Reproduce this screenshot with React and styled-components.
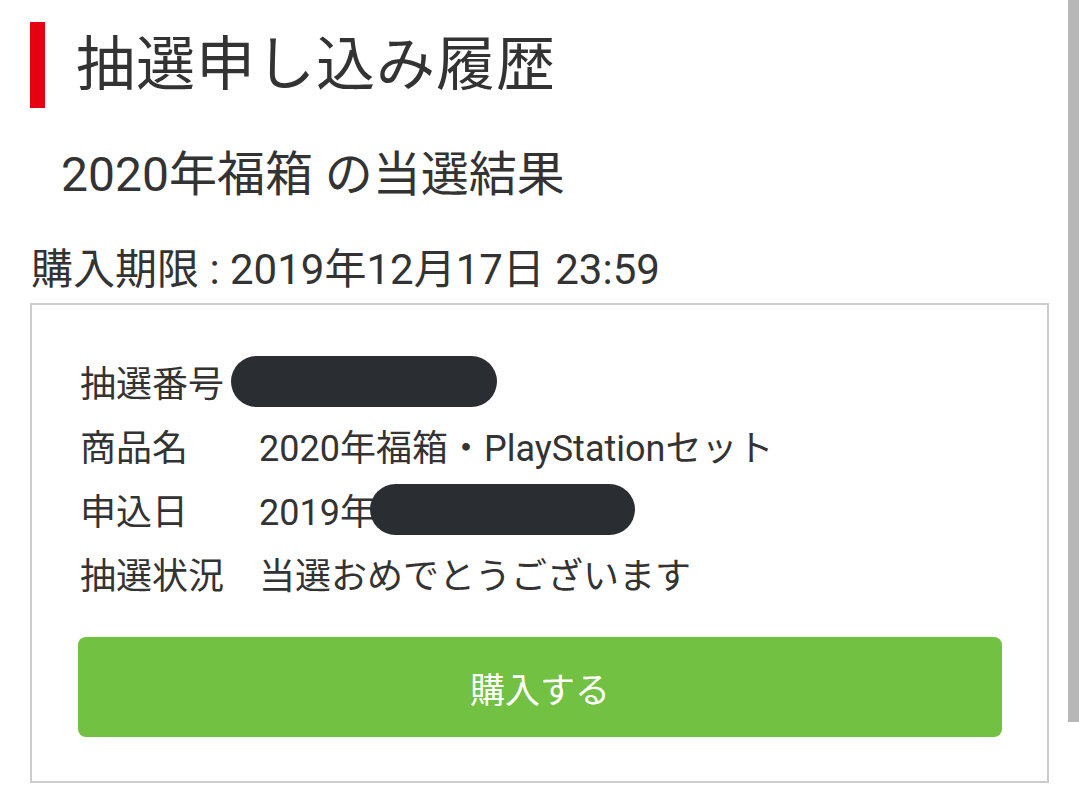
import React from "react";
import styled, { createGlobalStyle } from "styled-components";

const GlobalStyle = createGlobalStyle`
    html, body {
        margin: 0;
        padding: 0;
        background: #ffffff;
    }
    body {
        font-family: Roboto, "Noto Sans CJK JP", "Noto Sans", sans-serif;
        color: #333333;
        overflow: hidden;
    }
`;

const Page = styled.div`
    width: 1079px;
    padding: 22px 0 0 30px;
    box-sizing: border-box;
`;

const Heading = styled.h1`
    margin: 0;
    height: 86px;
    border-left: 15px solid #e50012;
    padding-left: 31px;
    font-size: 59px;
    font-weight: 400;
    line-height: 86px;
    letter-spacing: 1px;
`;

const SubHeading = styled.h2`
    margin: 37px 0 0;
    padding-left: 31px;
    font-size: 48px;
    font-weight: 400;
    line-height: 60px;
`;

const Deadline = styled.p`
    margin: 37px 0 0;
    padding-left: 1px;
    font-size: 42px;
    line-height: 56px;
`;

const Card = styled.section`
    margin-top: 5px;
    width: 1019px;
    box-sizing: border-box;
    border: 2px solid #cccccc;
    padding: 44px 45px 44px 46px;
`;

const InfoList = styled.dl`
    margin: 0;
    display: grid;
    grid-template-columns: 181px 1fr;
    grid-auto-rows: 64px;
    align-items: center;
    font-size: 36px;
`;

const Label = styled.dt`
    margin: 0;
    padding-left: 2px;
`;

const Value = styled.dd`
    margin: 0;
    display: flex;
    align-items: center;
    white-space: nowrap;
`;

const Redacted = styled.span`
    display: inline-block;
    width: ${(p) => p.w}px;
    height: 51px;
    margin-left: ${(p) => p.shift || 0}px;
    border-radius: 26px;
    background: #2a2e33;
`;

const BuyButton = styled.button`
    display: block;
    margin-top: 32px;
    width: 100%;
    height: 100px;
    border: none;
    border-radius: 8px;
    background: #72c142;
    color: #ffffff;
    font-family: inherit;
    font-size: 35px;
    cursor: pointer;
`;

const ScrollThumb = styled.div`
    position: fixed;
    top: 0;
    right: 0;
    width: 11px;
    height: 722px;
    background: #b7b7b7;
`;

export default function App() {
    return (
        <>
            <GlobalStyle />
            <Page>
                <Heading>抽選申し込み履歴</Heading>
                <SubHeading>2020年福箱 の当選結果</SubHeading>
                <Deadline>購入期限 : 2019年12月17日 23:59</Deadline>
                <Card>
                    <InfoList>
                        <Label>抽選番号</Label>
                        <Value>
                            <Redacted w={266} shift={-28} />
                        </Value>
                        <Label>商品名</Label>
                        <Value>2020年福箱・PlayStationセット</Value>
                        <Label>申込日</Label>
                        <Value>
                            2019年
                            <Redacted w={265} shift={-6} />
                        </Value>
                        <Label>抽選状況</Label>
                        <Value>当選おめでとうございます</Value>
                    </InfoList>
                    <BuyButton>購入する</BuyButton>
                </Card>
            </Page>
            <ScrollThumb />
        </>
    );
}
